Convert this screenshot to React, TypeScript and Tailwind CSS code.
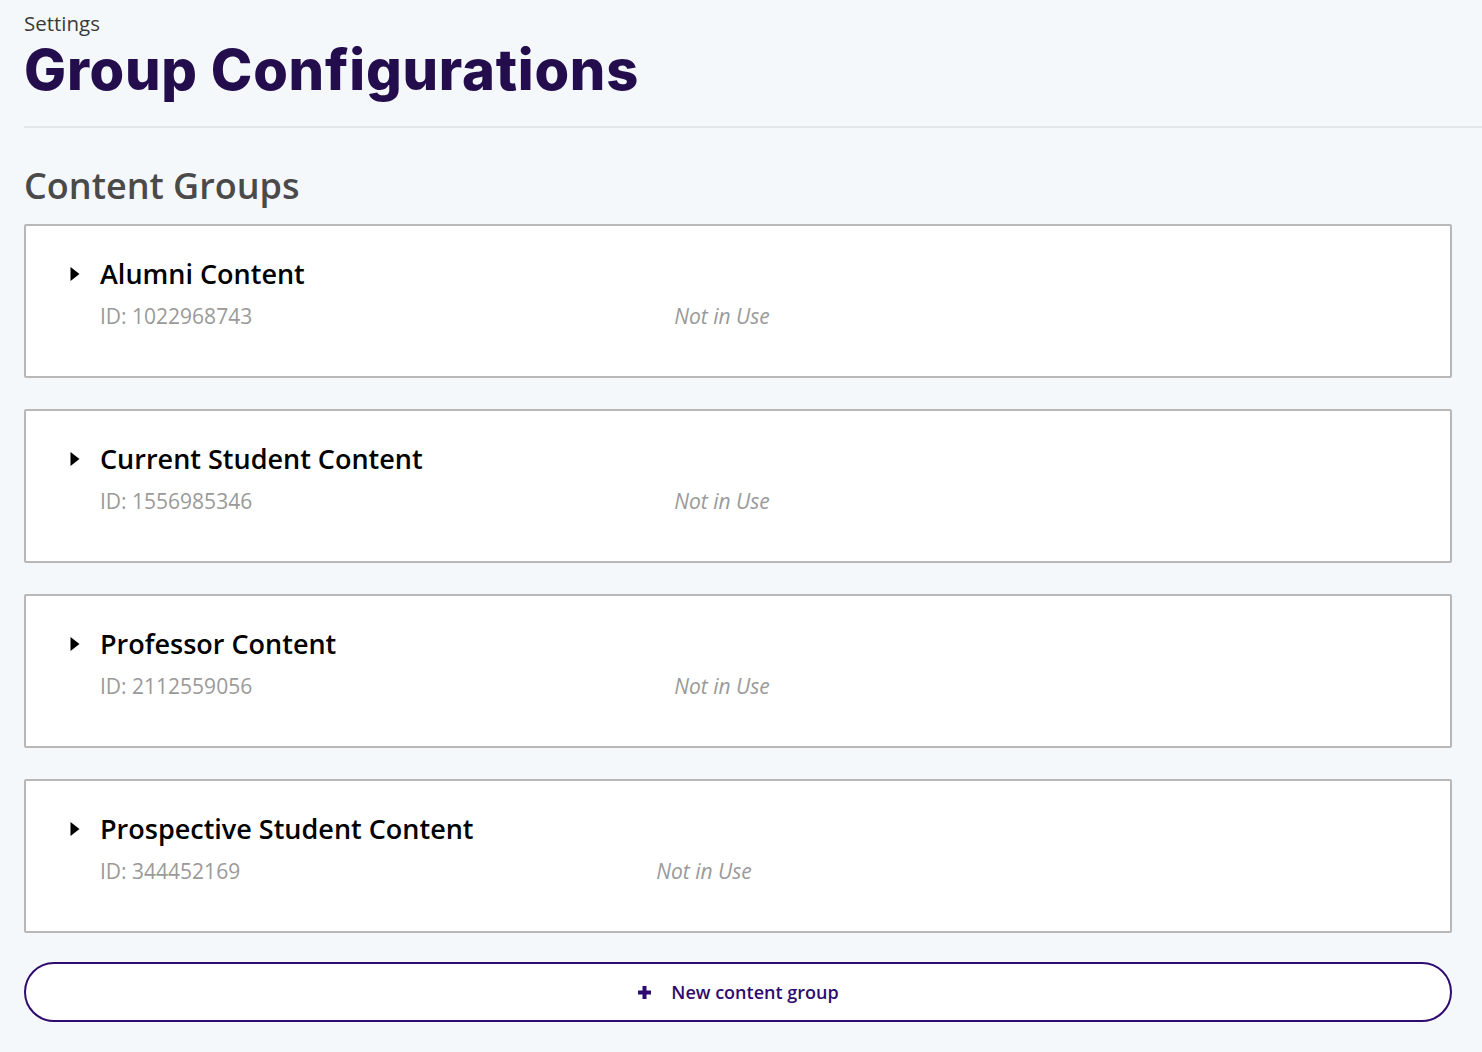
import React from "react";

const groups = [
  { name: "Alumni Content", id: "1022968743", gap: "ml-[422px]" },
  { name: "Current Student Content", id: "1556985346", gap: "ml-[422px]" },
  { name: "Professor Content", id: "2112559056", gap: "ml-[422px]" },
  { name: "Prospective Student Content", id: "344452169", gap: "ml-[416px]" },
];

export default function App() {
  return (
    <div className="min-h-[1052px] bg-[#f5f8fb] font-['Open_Sans',sans-serif]">
      <div className="pl-6 pt-[11px]">
        <div className="text-[20.5px] leading-[24px] text-[#3a3a3a]">Settings</div>
        <h1 className="mt-[5px] font-['Inter',sans-serif] font-extrabold text-[56px] leading-[60px] tracking-[0.75px] text-[#230d4d]">
          Group Configurations
        </h1>
        <div className="mt-[26px] h-[2px] bg-[#e3e6e9]" />
      </div>
      <div className="pl-6 pr-[30px] pb-8">
        <h2 className="mt-[36px] text-[36px] leading-[44px] font-semibold text-[#4a4a4a]">Content Groups</h2>
        <div className="mt-[16px] flex flex-col gap-[31px]">
          {groups.map((g) => (
            <div
              key={g.id}
              className="h-[154px] rounded-[2px] border-2 border-[#b8b8b8] bg-white pl-[42px] pt-[29px]"
            >
              <div className="flex items-center">
                <svg width="10" height="16" viewBox="0 0 10 16" className="ml-[2px]">
                  <path d="M0.5 1 L9.5 8 L0.5 15 Z" fill="#000" />
                </svg>
                <span className="ml-[20px] text-[27px] leading-[38px] font-semibold text-black">{g.name}</span>
              </div>
              <div className="mt-[8px] flex pl-[32px] text-[21px] leading-[30px] text-[#9a9a9a]">
                <span>ID: {g.id}</span>
                <span className={`${g.gap} italic`}>Not in Use</span>
              </div>
            </div>
          ))}
        </div>
        <button className="mt-[29px] flex h-[60px] w-full items-center justify-center rounded-full border-2 border-[#2f0b70] bg-white text-[#2f0b70]">
          <svg width="15" height="15" viewBox="0 0 15 15" className="mr-[19px]">
            <path d="M7.5 1 V14 M1 7.5 H14" stroke="#2f0b70" strokeWidth="4" />
          </svg>
          <span className="text-[18px] font-semibold">New content group</span>
        </button>
      </div>
    </div>
  );
}
